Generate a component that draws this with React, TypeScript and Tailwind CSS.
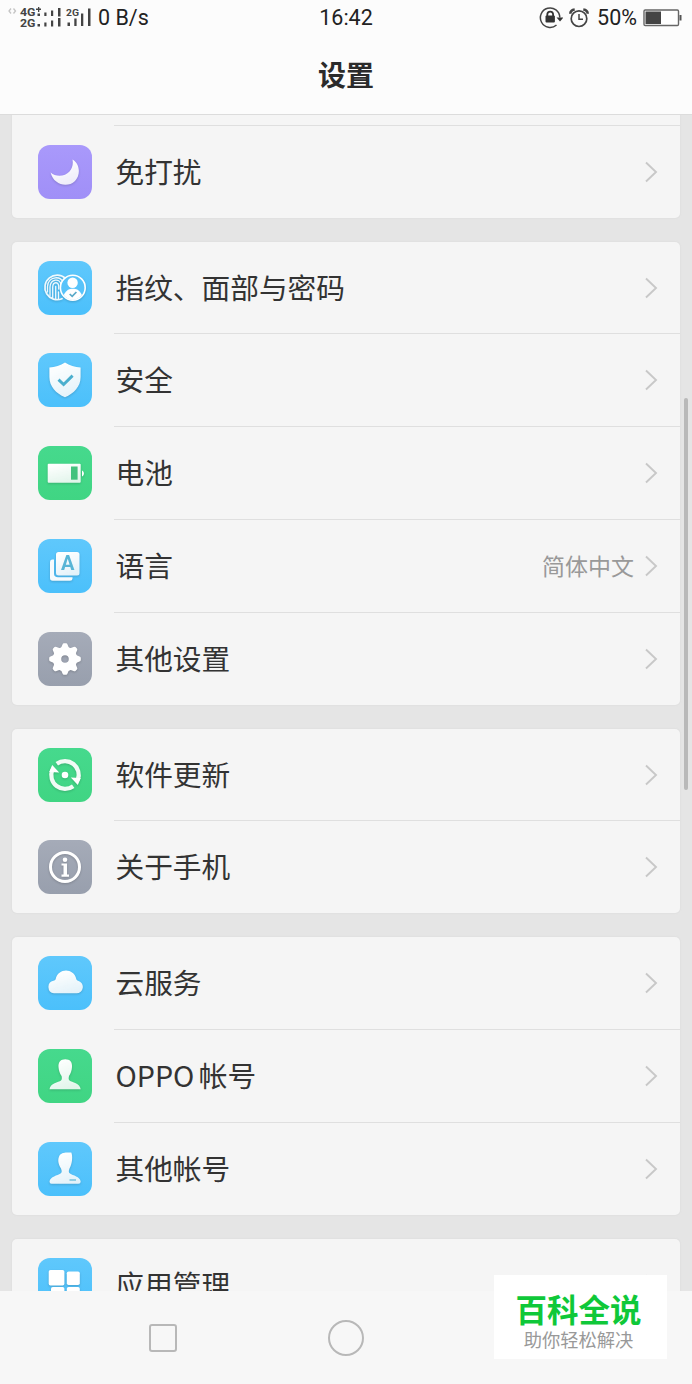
import React from "react";

type Row = {
  label: string;
  icon: React.ReactNode;
  color: string;
  value?: string;
};

const blue = "bg-linear-to-b from-[#5fc8fc] to-[#4bc0fb]";
const green = "bg-linear-to-b from-[#46d98d] to-[#40d583]";
const gray = "bg-linear-to-b from-[#a5abb8] to-[#989fad]";
const purple = "bg-linear-to-b from-[#a999fb] to-[#a08ff7]";

// all row icons share a 54x54 box
const Glyph: React.FC<{ children: React.ReactNode }> = ({ children }) => (
  <svg
    viewBox="0 0 54 54"
    className="w-[54px] h-[54px] drop-shadow-[0_1px_1px_rgba(0,0,0,0.18)]"
    fill="none"
  >
    <defs>
      <linearGradient id="shine" x1="0.3" y1="0" x2="0.7" y2="1">
        <stop offset="0" stopColor="#ffffff" />
        <stop offset="1" stopColor="#ffffff" stopOpacity="0.85" />
      </linearGradient>
    </defs>
    {children}
  </svg>
);

const MoonIcon = () => (
  <Glyph>
    <path d="M34.500 14.400C42.400 19 42.600 30.300 37 36C29.500 43.300 15.500 40 12.600 27.600C18 32.300 27 31.600 31.500 26.500C34.500 23 35.300 18.500 34.500 14.400Z" fill="url(#shine)" />
  </Glyph>
);

const FingerprintIcon = () => (
  <Glyph>
    <g stroke="#fff" strokeOpacity="0.9" strokeLinecap="round">
      <path d="M24 37.700A12.300 12.300 0 1 1 27.500 17.300" strokeWidth="1.700" />
      <path d="M9.500 31V25.500C10 14.500 24.500 14.500 25 22" strokeWidth="1.300" />
      <path d="M12 34.500V26C12.500 17.500 22 17 23 23.500" strokeWidth="1.300" />
      <path d="M14.700 36.500V26C15 20.500 20.500 20.500 20.700 25V28" strokeWidth="1.300" />
      <path d="M17.700 37.500V25.500M20.500 31V37.500" strokeWidth="1.300" />
    </g>
    <circle cx="34.800" cy="26.700" r="12.400" fill="#58c3fa" stroke="#fff" strokeWidth="1.600" />
    <circle cx="34.600" cy="21.800" r="5.200" fill="#fff" />
    <path d="M25.700 34C28.500 28.500 31.500 27.700 34.800 27.700C38 27.700 41.500 28.500 43.900 34C39.500 40.300 30 40.300 25.700 34Z" fill="#fff" />
    <path d="M31.700 33L34.200 35.400L38.400 31" stroke="#5aa9c8" strokeWidth="1.700" />
  </Glyph>
);

const ShieldIcon = () => (
  <Glyph>
    <path d="M27 9.500C31.500 12.500 37 14 42.600 14.500V24C42.600 33.500 36 40.500 27 44.300C18 40.500 11.400 33.500 11.400 24V14.500C17 14 22.500 12.500 27 9.500Z" fill="url(#shine)" />
    <path d="M20.500 26.600L25.600 31.500L34.600 22.600" stroke="#4aafce" strokeWidth="2.900" />
  </Glyph>
);

const BatteryIcon = () => (
  <Glyph>
    <rect x="9.700" y="17.700" width="33" height="19" rx="1" fill="url(#shine)" />
    <path d="M44 24.500C46.500 25.500 46.500 29.500 44 30.500Z" fill="#fff" />
    <rect x="33" y="20.500" width="6.600" height="13.200" fill="#43c27e" />
  </Glyph>
);

const LanguageIcon = () => (
  <Glyph>
    <path d="M14 20.500H16V34.500Q16 38.300 20 38.300H34.500V39.500Q34.500 41.800 32 41.800H14.500Q12 41.800 12 39V23Q12 20.500 14 20.500Z" fill="#fff" fillOpacity="0.95" />
    <rect x="18" y="13" width="23.500" height="23.500" rx="2.500" fill="url(#shine)" />
    <text x="29.800" y="31.300" fontSize="20" fontWeight="700" textAnchor="middle" fill="#58b5d6" className="font-['Roboto',sans-serif]">A</text>
  </Glyph>
);

const teeth = [0, 45, 90, 135, 180, 225, 270, 315];

const GearIcon = () => (
  <Glyph>
    <path d="M27 14.800a12.200 12.200 0 1 0 0 24.400a12.200 12.200 0 1 0 0-24.400ZM27 23.200a3.800 3.800 0 1 1 0 7.600a3.800 3.800 0 1 1 0-7.600Z" fill="#fff" fillRule="evenodd" />
    {teeth.map((deg) => (
      <path key={deg} d="M22.800 16.500L24.500 12.500Q24.800 11.200 26 11.200H28Q29.200 11.200 29.500 12.500L31.200 16.500Z" fill="#fff" transform={`rotate(${deg} 27 27)`} />
    ))}
  </Glyph>
);

const UpdateIcon = () => (
  <Glyph>
    <g stroke="#fff" strokeOpacity="0.93" strokeWidth="4.200">
      <path d="M18.800 15.800A13.800 13.800 0 0 1 39.800 32" />
      <path d="M35.200 38.200A13.800 13.800 0 0 1 14.200 22" />
    </g>
    <path d="M32.800 29.500L39.800 37L42.800 30ZM21.200 24.500L14.200 17L11.200 24Z" fill="#fff" />
    <circle cx="27" cy="27" r="3.300" fill="#fff" />
  </Glyph>
);

const InfoIcon = () => (
  <Glyph>
    <circle cx="27" cy="27" r="14.500" stroke="#fff" strokeWidth="3" />
    <circle cx="27" cy="19.800" r="2.300" fill="#fff" />
    <path d="M23.500 23.500H29V34.500H31V36.700H23.500V34.500H25.500V25.500H23.500Z" fill="#fff" />
  </Glyph>
);

const CloudIcon = () => (
  <Glyph>
    <path d="M16 37.300A6.400 6.400 0 0 1 15.500 24.700C16.500 24.500 17.300 24.300 17.700 23C20 11.500 36 11.500 38.300 23C38.600 24.300 39.300 24.500 40 24.700A6.400 6.400 0 0 1 38.500 37.300Z" fill="url(#shine)" />
  </Glyph>
);

const AccountIcon = () => (
  <Glyph>
    <path d="M27.300 10.300C32 10.300 34.400 13 34 18C33.900 21.500 32.500 25 31 27C30.500 29 30.500 30.500 31.500 31.500C34 33.500 42 34 42.700 40.200H11.500C12.200 34 20.500 33.500 23 31.500C24 30.500 24 29 23.600 27C22 25 20.700 21.500 20.500 18C20.200 13 22.700 10.300 27.300 10.300Z" fill="url(#shine)" />
  </Glyph>
);

const OtherAccountIcon = () => (
  <Glyph>
    <path d="M33.300 10.500C34.800 14 34.500 21 31.500 26.500C30.500 29 30.500 30.500 32 31.500C35 33.500 42 34.500 42.700 39.500Q42.700 41.800 40.500 41.800H13.500Q11.500 41.800 11.500 39.500C12.200 34.500 19.500 33.500 22.500 31.500C24 30.500 24 29 23 26.500C20 22 19.500 17 21.500 13.500C24 10 29 10.500 33.300 10.500Z" fill="url(#shine)" />
    <path d="M31.500 38H38" stroke="#58b5d6" strokeWidth="1.200" />
  </Glyph>
);

const AppsIcon = () => (
  <Glyph>
    <rect x="10.700" y="12" width="15.700" height="15.500" rx="1.800" fill="#fff" />
    <rect x="28.800" y="13.500" width="13" height="13.500" rx="1.800" fill="#fff" />
    <rect x="13" y="29" width="13.400" height="13" rx="1.800" fill="#fff" />
    <rect x="28.800" y="29" width="13" height="13" rx="1.800" fill="#fff" />
  </Glyph>
);

const groups: Row[][] = [
  [{ label: "免打扰", icon: <MoonIcon />, color: purple }],
  [
    { label: "指纹、面部与密码", icon: <FingerprintIcon />, color: blue },
    { label: "安全", icon: <ShieldIcon />, color: blue },
    { label: "电池", icon: <BatteryIcon />, color: green },
    { label: "语言", icon: <LanguageIcon />, color: blue, value: "简体中文" },
    { label: "其他设置", icon: <GearIcon />, color: gray },
  ],
  [
    { label: "软件更新", icon: <UpdateIcon />, color: green },
    { label: "关于手机", icon: <InfoIcon />, color: gray },
  ],
  [
    { label: "云服务", icon: <CloudIcon />, color: blue },
    { label: "OPPO 帐号", icon: <AccountIcon />, color: green },
    { label: "其他帐号", icon: <OtherAccountIcon />, color: blue },
  ],
  [{ label: "应用管理", icon: <AppsIcon />, color: blue }],
];

const StatusBar: React.FC = () => (
  <div className="grid grid-cols-3 items-center h-9 font-['Roboto',sans-serif] text-[21.500px] text-[#222]">
    <div className="flex items-center">
      {/* signal strength of both sims */}
      <svg width="96" height="36" viewBox="0 0 96 36" className="shrink-0">
        <path d="M11 8.500L9 11L11 13.500M13.500 8.500L15.500 11L13.500 13.500" stroke="#c4c4c4" strokeWidth="1.300" fill="none" />
        <g fill="#444" fontWeight="700">
          <text x="20" y="16.300" fontSize="11.500" textLength="15.500" lengthAdjust="spacingAndGlyphs">4G</text>
          <text x="20" y="27" fontSize="11.500" textLength="15.500" lengthAdjust="spacingAndGlyphs">2G</text>
          <text x="66" y="15.500" fontSize="9.500" textLength="13" lengthAdjust="spacingAndGlyphs">2G</text>
        </g>
        <g fill="#444">
          <path d="M36 8.600h5v1.300h-5zM38 7h1.300v5h-1.300z" />
          <path d="M37.500 13.500h2.500v2.500h-2.500zM44.300 12.500h2.200v3.500h-2.200zM51 10.500h2.200v5.500h-2.200zM58 8h2.500v8.500h-2.500z" />
          <path d="M37.500 24h2.500v2.500h-2.500zM44.300 22.500h2.200v4h-2.200zM51 20.500h2.200v6h-2.200zM58 18h2.500v8.500h-2.500z" />
          <path d="M67.500 22.500h2.500v3.500h-2.500zM74.300 18.500h2.300v7.500h-2.300zM81 13.500h2.300v12.500h-2.300zM88 8.500h2.500v17.500h-2.500z" />
        </g>
      </svg>
      <span className="ml-0.5 whitespace-nowrap">0 B/s</span>
    </div>
    <span className="text-center">16:42</span>
    <div className="flex items-center justify-end pr-2.5">
      <svg width="24" height="24" viewBox="0 0 24 24" fill="none" className="mr-1.5">
        <path d="M17.500 19A9.700 9.700 0 1 1 20.800 11.500" stroke="#444" strokeWidth="1.500" />
        <path d="M17.500 11.500H24.500L21 15.500Z" fill="#333" />
        <path d="M8.300 10.500V8.500A2.900 2.900 0 0 1 14.100 8.500V10.500" stroke="#333" strokeWidth="1.800" />
        <rect x="6.500" y="9.500" width="9.400" height="7" rx="1" fill="#333" />
      </svg>
      <svg width="20" height="20" viewBox="0 0 20 20" fill="none" className="mr-2" stroke="#444">
        <circle cx="10" cy="10.700" r="7.800" strokeWidth="1.700" />
        <path d="M10 6V11.200H14" strokeWidth="1.500" />
        <path d="M1.300 5.800Q1.500 2 5.700 1.500M18.700 5.800Q18.500 2 14.300 1.500" strokeWidth="2.600" />
      </svg>
      <span className="mr-1.5">50%</span>
      <svg width="39" height="18" viewBox="0 0 39 18">
        <rect x="1" y="1" width="34.500" height="15.500" rx="1.200" fill="#fff" stroke="#666" strokeWidth="1.400" />
        <rect x="2.500" y="2.500" width="15.500" height="12.500" fill="#444" />
        <rect x="36.500" y="6" width="2" height="5.500" fill="#555" />
      </svg>
    </div>
  </div>
);

const SettingRow: React.FC<{ row: Row }> = ({ row }) => (
  <div className="flex items-center h-[91.800px] pl-[26px] pr-[22px]">
    <div className={`w-[54px] h-[54px] rounded-[12px] shrink-0 overflow-hidden ${row.color}`}>
      {row.icon}
    </div>
    <span className="ml-[23.500px] pb-[2px] text-[28.700px] leading-10 [word-spacing:-2px] text-[#333]">{row.label}</span>
    {row.value && <span className="ml-auto mr-2.5 pb-[2px] text-[23px] text-[#999]">{row.value}</span>}
    <svg
      width="14"
      height="22"
      viewBox="0 0 14 22"
      fill="none"
      className={row.value ? "shrink-0" : "shrink-0 ml-auto"}
    >
      <path d="M2 1.500L12 11L2 20.500" stroke="#c8c8c8" strokeWidth="1.900" />
    </svg>
  </div>
);

const App: React.FC = () => {
  return (
    <div className="relative flex flex-col w-[692px] h-[1384px] overflow-hidden bg-[#e5e5e5] font-['Noto_Sans_CJK_SC',sans-serif]">
      <header className="h-[115px] shrink-0 bg-[#fcfcfc] border-b border-[#dcdcdc]">
        <StatusBar />
        <h1 className="mt-[18px] text-center text-[28px] leading-10 font-bold text-[#2b2b2b]">设置</h1>
      </header>

      <main className="flex-1 min-h-0 overflow-hidden px-3 flex flex-col gap-[24px]">
        {groups.map((rows, i) => (
          <section
            key={i}
            className={`shrink-0 bg-[#f5f5f5] shadow-[0_0_1px_1px_#e0e0e0] ${
              i === 0 ? "rounded-b-[5px] pt-[9.900px]" : "rounded-[5px]"
            }`}
          >
            {i === 0 && <div className="ml-[102px] h-px bg-[#dfdfdf]" />}
            {rows.map((row, n) => (
              <React.Fragment key={row.label}>
                {n > 0 && <div className="ml-[102px] h-px bg-[#dfdfdf]" />}
                <SettingRow row={row} />
              </React.Fragment>
            ))}
          </section>
        ))}
      </main>

      {/* system navigation */}
      <nav className="h-[93px] shrink-0 flex items-center bg-[#f7f7f7]">
        <div className="ml-[149px] w-7 h-7 border-2 border-[#b8b8b8] rounded-[3px]" />
        <div className="ml-[151px] w-9 h-9 border-2 border-[#b8b8b8] rounded-full" />
      </nav>

      {/* scroll thumb */}
      <div className="absolute left-[684px] top-[398px] w-1 h-[392px] rounded-full bg-[#b9b9b9]" />

      <div className="absolute left-[494px] top-[1275px] w-[173px] h-[84px] bg-white flex flex-col items-center pr-1">
        <p className="mt-[14px] text-[31.500px] leading-[38px] font-bold text-[#0fc839]">百科全说</p>
        <p className="text-[18.300px] leading-6 text-[#999]">助你轻松解决</p>
      </div>
    </div>
  );
};

export default App;
